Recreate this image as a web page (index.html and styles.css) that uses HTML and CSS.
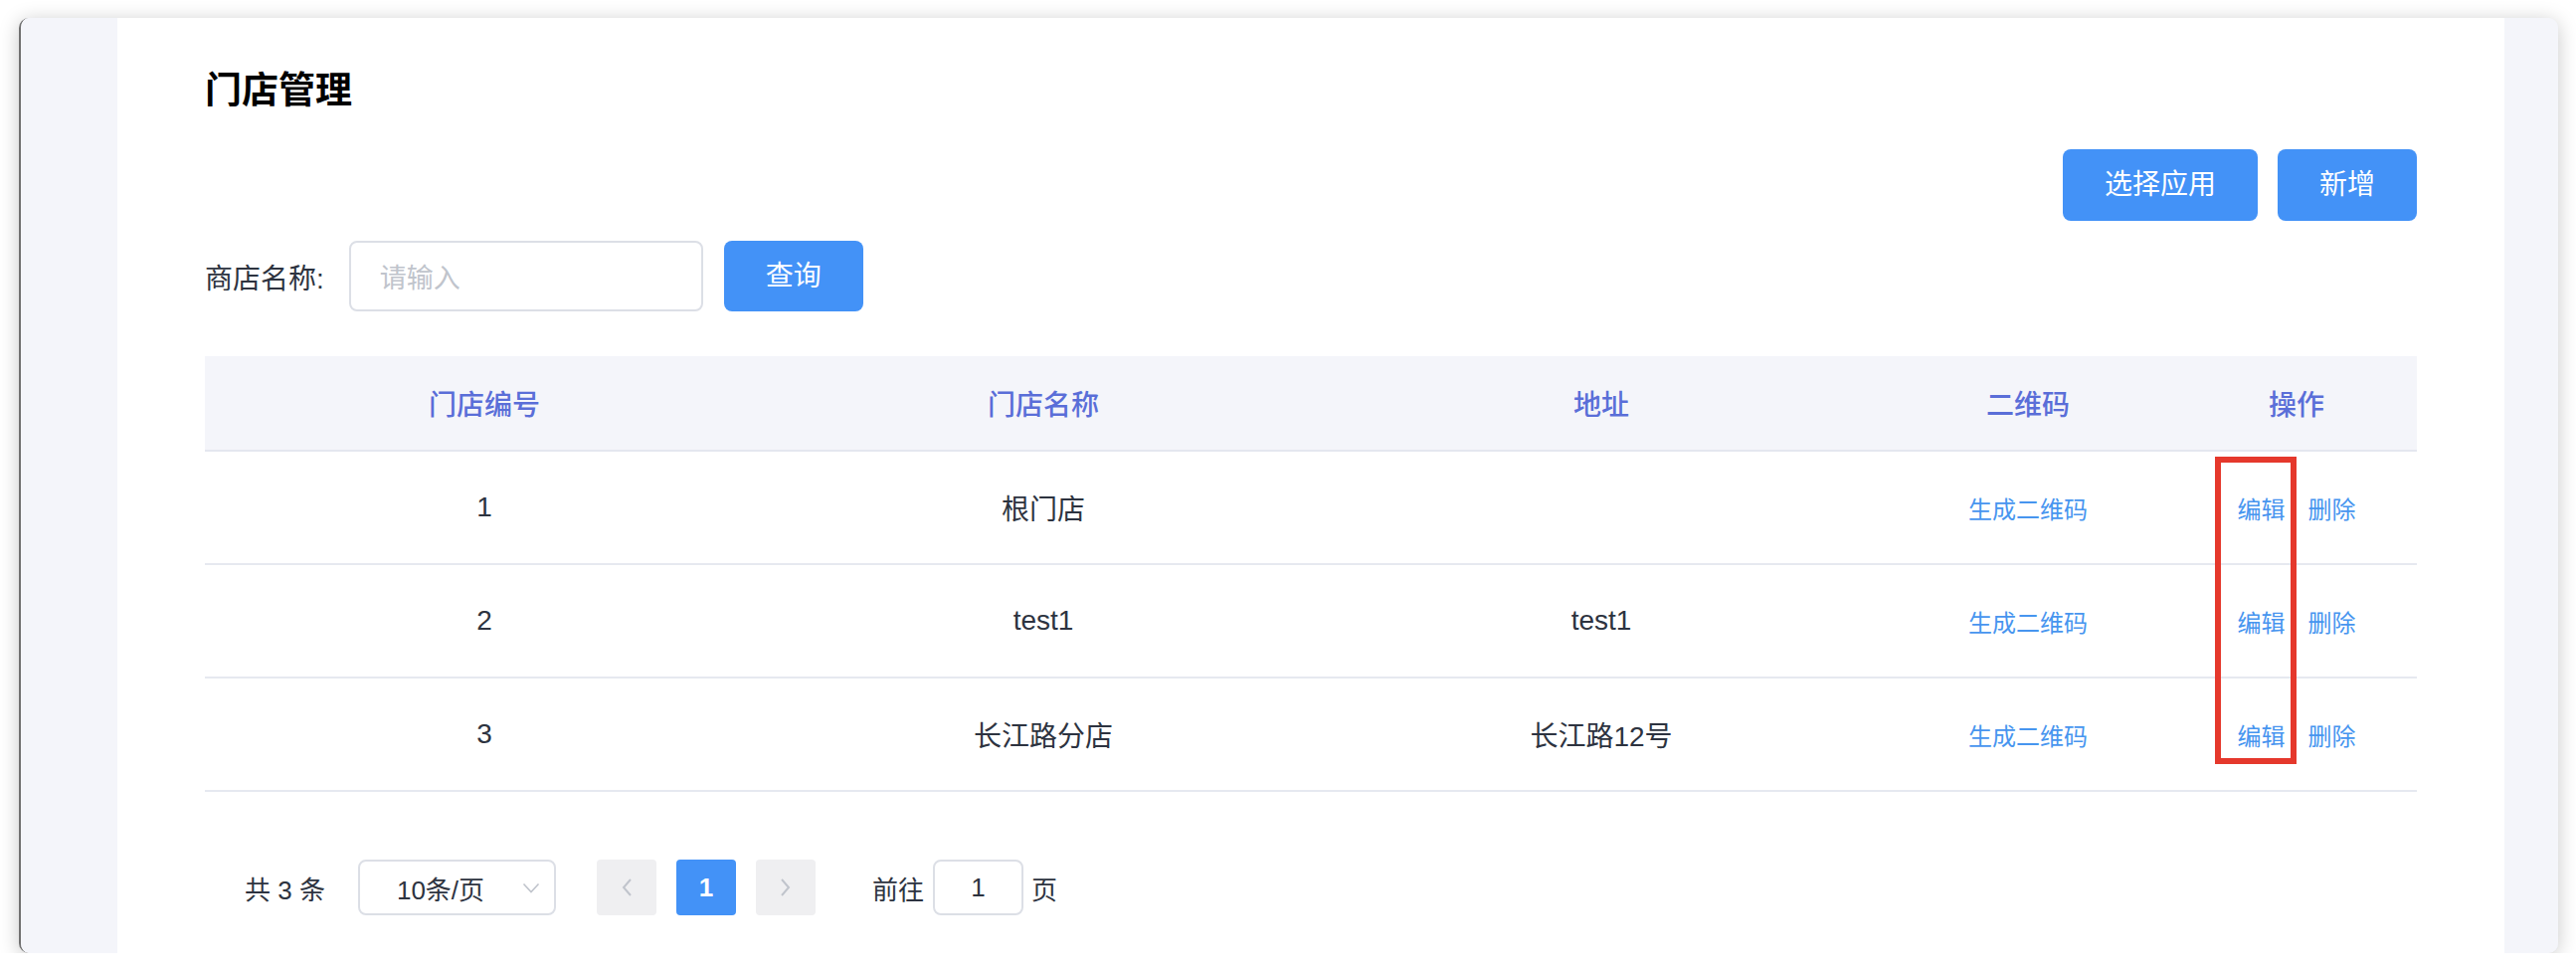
FILE: index.html
```html
<!DOCTYPE html>
<html lang="zh-CN">
<head>
<meta charset="utf-8">
<title>门店管理</title>
<link rel="stylesheet" href="styles.css">
</head>
<body>
<div class="window">
  <aside class="side side-left"></aside>
  <main class="main">
    <h1 class="title">门店管理</h1>
    <div class="toolbar">
      <button class="btn">选择应用</button>
      <button class="btn">新增</button>
    </div>
    <div class="search">
      <span class="search-label">商店名称:</span>
      <div class="input"><span class="placeholder">请输入</span></div>
      <button class="btn btn-query">查询</button>
    </div>
    <div class="table-wrap">
      <div class="table">
        <div class="tr thead">
          <div class="th">门店编号</div>
          <div class="th">门店名称</div>
          <div class="th">地址</div>
          <div class="th">二维码</div>
          <div class="th">操作</div>
        </div>
        <div class="tr">
          <div class="td">1</div>
          <div class="td">根门店</div>
          <div class="td"></div>
          <div class="td"><a class="link">生成二维码</a></div>
          <div class="td actions"><a class="link">编辑</a><a class="link">删除</a></div>
        </div>
        <div class="tr">
          <div class="td">2</div>
          <div class="td">test1</div>
          <div class="td">test1</div>
          <div class="td"><a class="link">生成二维码</a></div>
          <div class="td actions"><a class="link">编辑</a><a class="link">删除</a></div>
        </div>
        <div class="tr">
          <div class="td">3</div>
          <div class="td">长江路分店</div>
          <div class="td">长江路12号</div>
          <div class="td"><a class="link">生成二维码</a></div>
          <div class="td actions"><a class="link">编辑</a><a class="link">删除</a></div>
        </div>
      </div>
      <div class="highlight"></div>
    </div>
    <div class="pagination">
      <span class="total">共 3 条</span>
      <div class="sizes">
        <span>10条/页</span>
        <svg class="caret" width="18" height="11" viewBox="0 0 18 11"><path d="M1.5 1.5 L9 9.5 L16.5 1.5" fill="none" stroke="#c0c4cc" stroke-width="1.6"/></svg>
      </div>
      <button class="pg-btn pg-prev"><svg width="12" height="20" viewBox="0 0 12 20"><path d="M10 2 L3 10 L10 18" fill="none" stroke="#c0c4cc" stroke-width="2"/></svg></button>
      <button class="pg-btn pg-active">1</button>
      <button class="pg-btn pg-next"><svg width="12" height="20" viewBox="0 0 12 20"><path d="M2 2 L9 10 L2 18" fill="none" stroke="#c0c4cc" stroke-width="2"/></svg></button>
      <span class="jump-text">前往</span>
      <div class="jump-input">1</div>
      <span class="jump-text">页</span>
    </div>
  </main>
  <aside class="side side-right"></aside>
</div>
</body>
</html>
```

FILE: styles.css
```css
* { box-sizing: border-box; }
html, body { margin: 0; padding: 0; }
body {
  background: #ffffff;
  font-family: "Liberation Sans", "Noto Sans CJK SC", sans-serif;
  color: #2d3340;
}
.window {
  display: flex;
  margin: 18px 0 0 19px;
  width: 2553px;
  height: 940px;
  border-radius: 10px;
  border-left: 2px solid #707070;
  overflow: hidden;
  background: #f4f5fa;
  box-shadow: 0 3px 20px rgba(0, 0, 0, 0.22);
}
.side { flex: none; background: #f4f5fa; }
.side-left { width: 97px; }
.side-right { width: 54px; }
.main {
  flex: none;
  width: 2400px;
  background: #ffffff;
  padding: 54px 88px 0;
}
.title {
  margin: 0;
  height: 40px;
  font-size: 37px;
  line-height: 40px;
  font-weight: 700;
  color: #000000;
}
.toolbar {
  display: flex;
  justify-content: flex-end;
  gap: 20px;
  margin-top: 38px;
}
.btn {
  height: 72px;
  padding: 0 42px;
  border: none;
  border-radius: 8px;
  background: #4392f7;
  color: #ffffff;
  font-family: "Liberation Sans", "Noto Sans CJK SC", sans-serif;
  font-size: 28px;
  line-height: 1;
}
.search {
  display: flex;
  align-items: center;
  height: 71px;
  margin-top: 20px;
}
.search-label {
  font-size: 28px;
  margin-right: 25px;
  color: #2d3340;
}
.input {
  display: flex;
  align-items: center;
  width: 356px;
  height: 71px;
  padding-left: 29px;
  border: 2px solid #dcdfe6;
  border-radius: 8px;
}
.placeholder { font-size: 27px; color: #c0c4cc; }
.btn-query { height: 71px; margin-left: 21px; }

.table-wrap { position: relative; margin-top: 45px; width: 2224px; }
.tr {
  display: grid;
  grid-template-columns: 562px 562px 560px 298px 242px;
  height: 114px;
  border-bottom: 2px solid #e6e9f0;
}
.tr.thead {
  height: 96px;
  background: #f4f5fa;
  border-bottom: 2px solid #e4e7ef;
}
.th, .td {
  display: flex;
  align-items: center;
  justify-content: center;
  font-size: 28px;
}
.th { color: #5a6ed8; font-weight: 500; }
.td { color: #2d3340; }
.link { color: #4795ef; font-size: 24px; text-decoration: none; }
.actions { gap: 23px; }
.highlight {
  position: absolute;
  left: 2021px;
  top: 101px;
  width: 82px;
  height: 309px;
  border: 6px solid #e5382c;
  pointer-events: none;
}

.pagination {
  display: flex;
  align-items: center;
  height: 56px;
  margin-top: 68px;
  padding-left: 40px;
  font-size: 26px;
  color: #2d3340;
}
.total { margin-right: 33px; }
.sizes {
  display: flex;
  align-items: center;
  justify-content: space-between;
  width: 199px;
  height: 56px;
  padding: 0 14px 0 37px;
  margin-right: 41px;
  border: 2px solid #dcdfe6;
  border-radius: 8px;
}
.pg-btn {
  display: flex;
  align-items: center;
  justify-content: center;
  width: 60px;
  height: 56px;
  margin-right: 20px;
  padding: 0;
  border: none;
  border-radius: 4px;
  background: #efeff1;
  font-family: "Liberation Sans", "Noto Sans CJK SC", sans-serif;
  font-size: 26px;
}
.pg-active { background: #4392f7; color: #ffffff; font-weight: 700; }
.pg-next { margin-right: 57px; }
.jump-input {
  display: flex;
  align-items: center;
  justify-content: center;
  width: 91px;
  height: 56px;
  margin: 0 8px 0 9px;
  border: 2px solid #dcdfe6;
  border-radius: 8px;
}
```
